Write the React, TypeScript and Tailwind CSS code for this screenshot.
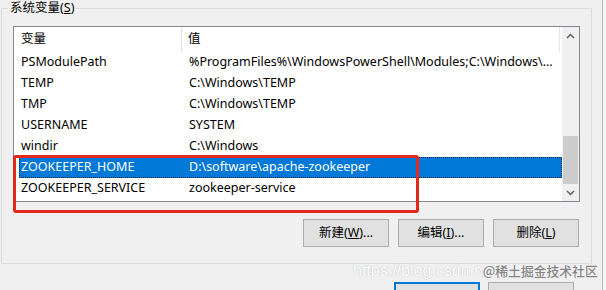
import React from "react";

const rows: [string, string][] = [
  ["PSModulePath", "%ProgramFiles%\\WindowsPowerShell\\Modules;C:\\Windows\\..."],
  ["TEMP", "C:\\Windows\\TEMP"],
  ["TMP", "C:\\Windows\\TEMP"],
  ["USERNAME", "SYSTEM"],
  ["windir", "C:\\Windows"],
  ["ZOOKEEPER_HOME", "D:\\software\\apache-zookeeper"],
  ["ZOOKEEPER_SERVICE", "zookeeper-service"],
];

const font = { fontFamily: '"Noto Sans", "Noto Sans CJK SC", sans-serif' };

function Btn({ children, blue }: { children: React.ReactNode; blue?: boolean }) {
  return (
    <div
      className={
        "w-[86px] h-[28px] flex items-center justify-center bg-[#e1e1e1] text-[12.5px] " +
        (blue ? "border-2 border-[#0078d7]" : "border border-[#adadad]")
      }
    >
      {children}
    </div>
  );
}

export default function App() {
  return (
    <div className="relative w-[606px] h-[290px] overflow-hidden bg-[#f0f0f0] text-black text-[12.5px]" style={font}>
      <div className="flex h-full">
        <div className="w-[602px]">
          <div className="pt-[8px] pl-[1px]">
            {/* group box */}
            <div className="relative w-[591px] h-[256px] border border-[#dcdcdc]">
              <div className="absolute -top-[10px] left-[6px] px-[2px] bg-[#f0f0f0] leading-[18px]">
                系统变量(<span className="underline">S</span>)
              </div>
              <div className="pl-[11px] pt-[17px]">
                {/* list box */}
                <div className="w-[567px] h-[176px] border border-[#828790] bg-white flex">
                  <div className="w-[548px] flex flex-col">
                    <div className="h-[25px] flex items-center">
                      <div className="w-[168px] h-full pl-[7px] flex items-center border-r border-[#e5e5e5]">变量</div>
                      <div className="w-[378px] h-full pl-[6px] flex items-center border-r border-[#e5e5e5]">值</div>
                    </div>
                    <div className="pl-[5px] flex flex-col">
                      {rows.map(([k, v], i) => {
                        const sel = i === 5;
                        return (
                          <div
                            key={k}
                            className={
                              "h-[21px] flex items-center whitespace-nowrap overflow-hidden " +
                              (sel ? "bg-[#0078d7] text-white border border-dotted border-[#1e2a3a]" : "border border-transparent")
                            }
                          >
                            <div className="w-[162px] shrink-0 pl-[1px]">{k}</div>
                            <div className="pl-[7px]">{v}</div>
                          </div>
                        );
                      })}
                    </div>
                  </div>
                  {/* scrollbar */}
                  <div className="w-[17px] bg-[#f0f0f0] flex flex-col">
                    <div className="h-[17px] flex items-center justify-center">
                      <svg width="9" height="6" viewBox="0 0 9 6">
                        <path d="M1 5 L4.5 1.5 L8 5" fill="none" stroke="#606060" strokeWidth="1.5" />
                      </svg>
                    </div>
                    <div className="flex-1 flex flex-col justify-end px-[1px]">
                      <div className="h-[48px] bg-[#cdcdcd]" />
                    </div>
                    <div className="h-[17px] flex items-center justify-center">
                      <svg width="9" height="6" viewBox="0 0 9 6">
                        <path d="M1 1 L4.5 4.5 L8 1" fill="none" stroke="#606060" strokeWidth="1.5" />
                      </svg>
                    </div>
                  </div>
                </div>
                {/* buttons */}
                <div className="w-[567px] pr-[1px] mt-[17px] flex justify-end gap-[9px]">
                  <Btn>
                    新建(<span className="underline">W</span>)...
                  </Btn>
                  <Btn>
                    编辑(<span className="underline">I</span>)...
                  </Btn>
                  <Btn>
                    删除(<span className="underline">L</span>)
                  </Btn>
                </div>
              </div>
            </div>
          </div>
          {/* bottom dialog buttons */}
          <div className="w-[574px] mt-[18px] flex justify-end gap-[8px]">
            <Btn blue>{""}</Btn>
            <Btn>{""}</Btn>
          </div>
        </div>
        <div className="w-[1px] h-full bg-[#b4b4b4]" />
        <div className="flex-1 h-full bg-[#f6f6f6]" />
      </div>

      {/* red annotation box */}
      <div className="absolute left-[13px] top-[155px] w-[406px] h-[58px] border-[3px] border-[#e3281f] rounded-[3px]" />

      {/* watermark */}
      <div className="absolute left-[353px] top-[261px] flex items-center whitespace-nowrap leading-[20px]">
        <span
          className="text-[16px] text-white"
          style={{ fontFamily: '"Liberation Sans", sans-serif', textShadow: "0 0 1px #a8a8a8" }}
        >
          https://blog.csdn.n
        </span>
        <span
          className="text-[12.8px] font-medium text-[#858585]"
          style={{ fontFamily: '"Noto Sans CJK SC", sans-serif', textShadow: "0 0 1px #ffffff" }}
        >
          @稀土掘金技术社区
        </span>
      </div>
    </div>
  );
}
